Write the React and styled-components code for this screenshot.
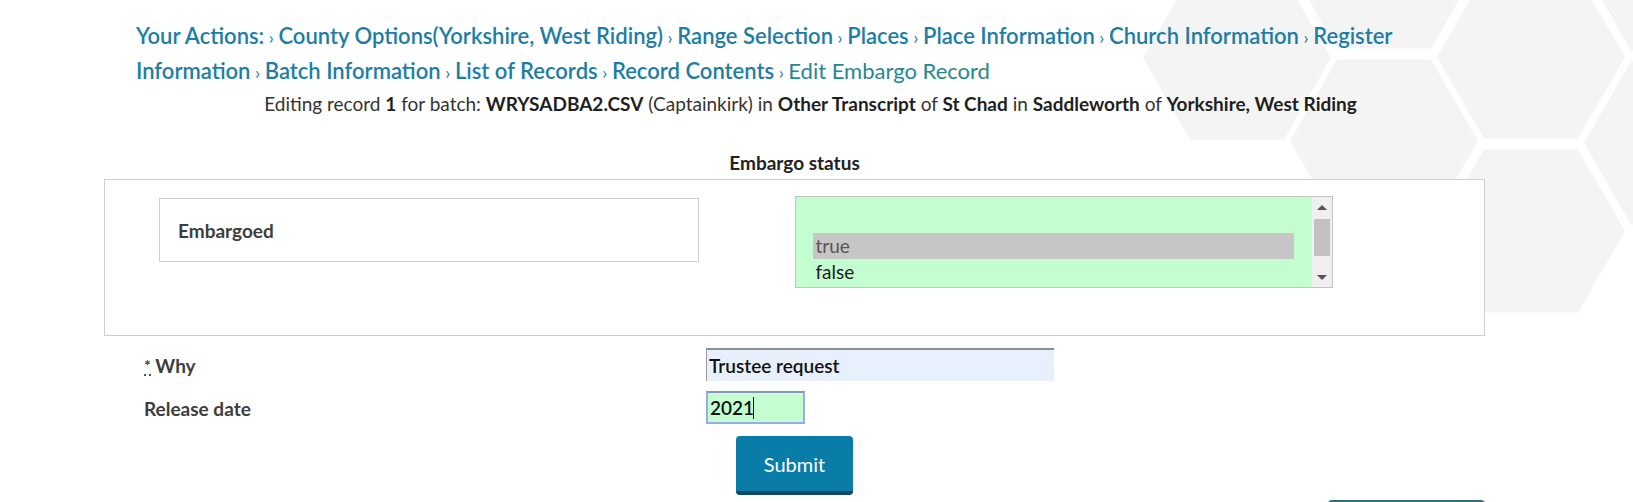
import React from 'react';
import styled, { createGlobalStyle } from 'styled-components';

const COLORS = {
  link: '#1c7ea4',
  current: '#24888f',
  text: '#2b2b2b',
  label: '#3d3d3d',
  border: '#cfcfcf',
  hex: '#f4f4f4',
  green: '#c3fdd0',
  autofill: '#e8f0fe',
  button: '#0a7ca8',
  buttonShadow: '#0b4b66',
};

const GlobalStyle = createGlobalStyle`
  html, body {
    margin: 0;
    padding: 0;
    background: #fff;
  }
  body {
    font-family: Lato, "Open Sans", sans-serif;
    color: ${COLORS.text};
  }
`;

// each crumb is a list of words; a crumb that wraps over the line end
// is split into word links so no single inline box spans two lines
const crumbs = [
  ['Your Actions:'],
  ['County Options(Yorkshire, West Riding)'],
  ['Range Selection'],
  ['Places'],
  ['Place Information'],
  ['Church Information'],
  ['Register', 'Information'],
  ['Batch Information'],
  ['List of Records'],
  ['Record Contents'],
];

// hex centres of the background pattern, in page coordinates
const HEXES = [
  [1237, 58],
  [1384, -33],
  [1384, 141],
  [1531, 57],
  [1531, 231],
  [1678, -31],
  [1678, 143],
];

const hexPoints = (cx, cy, r) => {
  const h = (r * Math.sqrt(3)) / 2;
  return [
    [cx - r, cy],
    [cx - r / 2, cy - h],
    [cx + r / 2, cy - h],
    [cx + r, cy],
    [cx + r / 2, cy + h],
    [cx - r / 2, cy + h],
  ]
    .map((p) => p.join(','))
    .join(' ');
};

const HexPattern = () => (
  <HexSvg viewBox="1133 0 500 340" width="500" height="340" aria-hidden="true">
    {HEXES.map(([cx, cy]) => (
      <polygon key={`${cx}-${cy}`} points={hexPoints(cx, cy, 94)} fill={COLORS.hex} />
    ))}
  </HexSvg>
);

const App = () => {
  return (
    <Page>
      <GlobalStyle />
      <HexPattern />
      <Content>
        <Breadcrumb>
          {crumbs.map((parts) => (
            <React.Fragment key={parts.join(' ')}>
              {parts.map((part, i) => (
                <React.Fragment key={part}>
                  {i > 0 && ' '}
                  <Crumb href="#">{part}</Crumb>
                </React.Fragment>
              ))}
              <Sep> › </Sep>
            </React.Fragment>
          ))}
          <Current>Edit Embargo Record</Current>
        </Breadcrumb>

        <Info>
          Editing record <b>1</b> for batch: <b>WRYSADBA2.CSV</b> (Captainkirk) in{' '}
          <b>Other Transcript</b> of <b>St Chad</b> in <b>Saddleworth</b> of{' '}
          <b>Yorkshire, West Riding</b>
        </Info>

        <Form>
          <Legend>Embargo status</Legend>
          <StatusBox>
            <LabelCell>
              <LabelBox>Embargoed</LabelBox>
            </LabelCell>
            <SelectCell>
              <ListBox>
                <Options>
                  <Option selected>true</Option>
                  <Option>false</Option>
                </Options>
                <Scrollbar>
                  <Arrow />
                  <Track>
                    <Thumb />
                  </Track>
                  <Arrow down />
                </Scrollbar>
              </ListBox>
            </SelectCell>
          </StatusBox>

          <Fields>
            <FieldLabel>
              <Required title="required">*</Required> Why
            </FieldLabel>
            <TextInput readOnly defaultValue="Trustee request" />
            <FieldLabel>Release date</FieldLabel>
            <DateField>
              <DateInput readOnly defaultValue="2021" />
              <Caret />
            </DateField>
          </Fields>

          <Actions>
            <SubmitButton type="button">Submit</SubmitButton>
          </Actions>
        </Form>

        <Footer>
          <GhostButton type="button" aria-label="Back" />
        </Footer>
      </Content>
    </Page>
  );
};

const Page = styled.div`
  position: relative;
  height: 502px;
  overflow: hidden;
`;

const HexSvg = styled.svg`
  position: absolute;
  top: 0;
  right: 0;
  z-index: 0;
`;

const Content = styled.div`
  position: relative;
  z-index: 1;
  padding: 19px 148px 0 104px;
`;

const Breadcrumb = styled.nav`
  padding-left: 32px;
  width: 1272px;
  font-size: 22px;
  line-height: 33px;
  font-weight: 600;
`;

const Crumb = styled.a`
  color: ${COLORS.link};
  text-decoration: none;
`;

const Sep = styled.span`
  color: ${COLORS.link};
  font-weight: 400;
  font-size: 18px;
`;

const Current = styled.span`
  color: ${COLORS.current};
  font-weight: 400;
`;

const Info = styled.p`
  margin: 0;
  padding-left: 32px;
  text-align: center;
  font-size: 19px;
  line-height: 30px;
  color: #333;

  b {
    font-weight: 700;
    color: #1f1f1f;
  }
`;

const Form = styled.form`
  margin-top: 33px;
`;

const Legend = styled.div`
  text-align: center;
  font-size: 19px;
  font-weight: 700;
  color: #222;
  line-height: 22px;
`;

const StatusBox = styled.div`
  margin-top: 5px;
  border: 1px solid ${COLORS.border};
  background: #fff;
  display: grid;
  grid-template-columns: 1fr 1fr;
  height: 157px;
  box-sizing: border-box;
`;

const LabelCell = styled.div`
  padding: 18px 96px 0 54px;
`;

const SelectCell = styled.div`
  padding: 16px 151px 0 0;
`;

const LabelBox = styled.div`
  height: 64px;
  box-sizing: border-box;
  border: 1px solid ${COLORS.border};
  display: flex;
  align-items: center;
  padding-left: 18px;
  font-size: 19px;
  font-weight: 700;
  color: ${COLORS.label};
`;

const ListBox = styled.div`
  height: 92px;
  box-sizing: border-box;
  border: 1px solid #c4c4c4;
  display: flex;
  background: ${COLORS.green};
`;

const Options = styled.div`
  flex: 1;
  padding: 36px 18px 0 17px;
`;

const Option = styled.div`
  height: 26px;
  line-height: 26px;
  padding-left: 3px;
  font-size: 19px;
  font-weight: 400;
  color: ${(p) => (p.selected ? '#555' : '#1e1e1e')};
  background: ${(p) => (p.selected ? '#c6c6c6' : 'transparent')};
`;

const Scrollbar = styled.div`
  width: 20px;
  background: #f0f0f0;
  display: flex;
  flex-direction: column;
  align-items: center;
`;

const Arrow = styled.span`
  height: 20px;
  display: flex;
  align-items: center;

  &::before {
    content: '';
    border-left: 5px solid transparent;
    border-right: 5px solid transparent;
    ${(p) => (p.down ? 'border-top' : 'border-bottom')}: 5px solid #555;
  }
`;

const Track = styled.div`
  flex: 1;
  width: 100%;
  padding: 2px 2px 0;
  box-sizing: border-box;
`;

const Thumb = styled.div`
  height: 37px;
  background: #c1c1c1;
`;

const Fields = styled.div`
  display: grid;
  grid-template-columns: 562px auto;
  row-gap: 10px;
  align-items: center;
  padding-left: 40px;
  margin-top: 12px;
`;

const FieldLabel = styled.label`
  font-size: 19px;
  font-weight: 700;
  color: ${COLORS.label};
  padding-top: 2px;
`;

const Required = styled.abbr`
  text-decoration: none;
  border-bottom: 2px dotted #555;
  font-size: 16px;
  vertical-align: 2px;
`;

const inputBase = `
  box-sizing: border-box;
  height: 33px;
  font-family: Lato, "Open Sans", sans-serif;
  font-size: 19px;
  font-weight: 600;
  color: #111;
  padding: 0 2px;
  outline: none;
`;

const TextInput = styled.input`
  ${inputBase}
  width: 348px;
  background: ${COLORS.autofill};
  border: none;
  border-top: 2px solid #8e8e8e;
  border-left: 1px solid #9a9a9a;
`;

const DateField = styled.div`
  position: relative;
  width: 99px;
`;

const DateInput = styled.input`
  ${inputBase}
  width: 99px;
  background: ${COLORS.green};
  border: 2px solid #93aeea;
  border-top-color: #8797b9;
`;

const Caret = styled.span`
  position: absolute;
  left: 47px;
  top: 6px;
  width: 1px;
  height: 22px;
  background: #111;
`;

const Actions = styled.div`
  display: flex;
  justify-content: center;
  margin-top: 12px;
`;

const SubmitButton = styled.button`
  width: 117px;
  height: 59px;
  border: none;
  border-radius: 4px;
  border-bottom: 4px solid ${COLORS.buttonShadow};
  background: ${COLORS.button};
  color: #fff;
  font-family: Lato, "Open Sans", sans-serif;
  font-size: 20px;
  font-weight: 400;
  cursor: pointer;
`;

const Footer = styled.div`
  display: flex;
  justify-content: flex-end;
  margin-top: 5px;
`;

const GhostButton = styled.button`
  width: 157px;
  height: 40px;
  border: none;
  border-top: 2px solid #2f6f78;
  border-radius: 4px 4px 0 0;
  background: #fff;
`;

export default App;
